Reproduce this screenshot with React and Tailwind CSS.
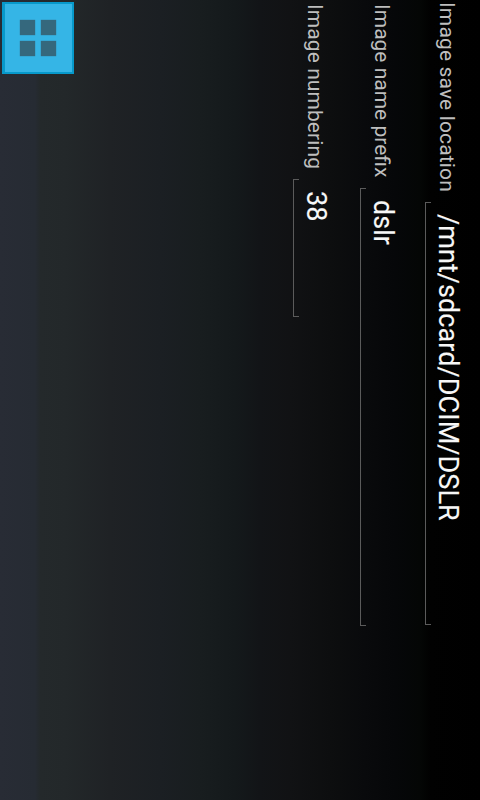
import React from "react";

function Field({ label, value, column, labelBox, labelText, bracket, valueText }) {
  return (
    <div className={`flex h-full shrink-0 flex-col items-start ${column}`}>
      <div className={`shrink-0 ${labelBox}`}>
        <div
          className={`w-6 whitespace-nowrap text-[21px] leading-6 text-[#bebebe] [writing-mode:vertical-rl] ${labelText}`}
        >
          {label}
        </div>
      </div>
      <div className={`flex shrink-0 items-start ${bracket}`}>
        <div className="h-full w-1.5 shrink-0 border-y border-l border-[#5b5b5b]" />
        <div
          className={`ml-px mt-3 w-8 shrink-0 whitespace-nowrap text-[27px] leading-8 text-[#f7f7f7] [writing-mode:vertical-rl] [-webkit-text-stroke:0.12px_#f7f7f7] ${valueText}`}
        >
          {value}
        </div>
      </div>
    </div>
  );
}

function GridButton() {
  return (
    <button className="ml-0.5 mt-0.5 grid h-18 w-18 shrink-0 grid-cols-[15px_15px] grid-rows-[15px_15px] content-start gap-x-[6px] gap-y-[6px] border-2 border-l-3 border-[#0799cb] bg-[#35b5e6] pl-[15px] pt-4">
      <span className="bg-[#35687d] shadow-[0_0_1px_#35687d]" />
      <span className="bg-[#35687d] shadow-[0_0_1px_#35687d]" />
      <span className="bg-[#35687d] shadow-[0_0_1px_#35687d]" />
      <span className="bg-[#35687d] shadow-[0_0_1px_#35687d]" />
    </button>
  );
}

export default function App() {
  return (
    <div className="flex h-[800px] w-[480px] items-start justify-between overflow-hidden bg-[linear-gradient(to_right,#282c35_0px,#262b33_35px,#24292b_40px,#23282a_65px,#1f2225_110px,#1b1f23_160px,#181d1f_200px,#14191b_235px,#121417_260px,#111214_290px,#0d0e0f_330px,#090a0c_365px,#060709_395px,#040605_420px,#010101_430px,#000000_480px)] font-['Roboto',sans-serif]">
      <GridButton />
      <div className="flex h-full flex-row-reverse">
        <Field
          label="Image save location"
          value="/mnt/sdcard/DCIM/DSLR"
          column="w-[55px]"
          labelBox="h-[202px] pl-2.5 pt-0.5"
          labelText="tracking-[0.14px]"
          bracket="h-[423px]"
          valueText="tracking-[0.07px]"
        />
        <Field
          label="Image name prefix"
          value="dslr"
          column="w-[65px]"
          labelBox="h-[188px] pl-2.5 pt-1"
          labelText=""
          bracket="h-[438px]"
          valueText=""
        />
        <Field
          label="Image numbering"
          value="38"
          column="w-[67px]"
          labelBox="h-[179px] pl-2.5 pt-1"
          labelText="tracking-[0.08px]"
          bracket="h-[138px]"
          valueText=""
        />
      </div>
    </div>
  );
}
